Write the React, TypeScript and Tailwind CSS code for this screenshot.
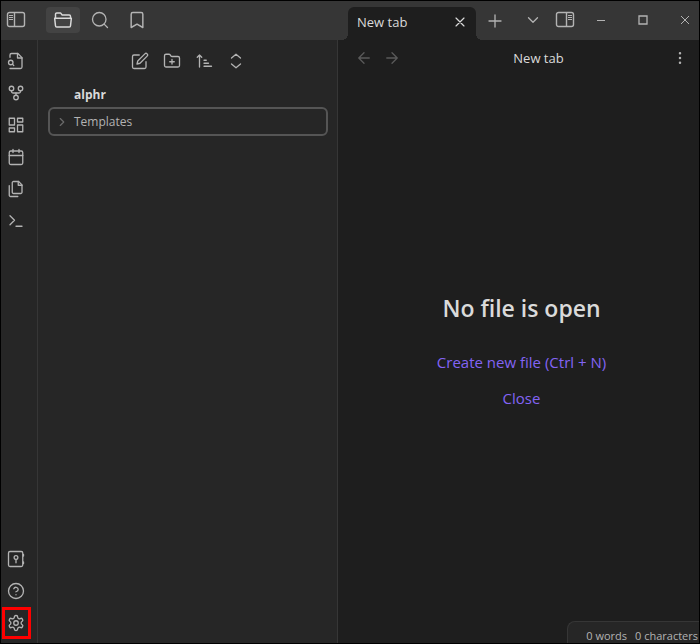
import type { ReactNode } from "react";

interface IconProps {
  size?: number;
  stroke?: number;
  children: ReactNode;
}

function Icon({ size = 18, stroke = 1.75, children }: IconProps) {
  return (
    <svg
      width={size}
      height={size}
      viewBox="0 0 24 24"
      fill="none"
      stroke="currentColor"
      strokeWidth={stroke}
      strokeLinecap="round"
      strokeLinejoin="round"
      aria-hidden="true"
      className="shrink-0"
    >
      {children}
    </svg>
  );
}

function SidebarIcon({ side }: { side: "left" | "right" }) {
  const left = side === "left";
  return (
    <svg width="20" height="18" viewBox="0 0 20 18" fill="none" stroke="currentColor" aria-hidden="true">
      <rect x="1.5" y="1.5" width="17" height="14" rx="2" strokeWidth="1.4" />
      <path d={left ? "M8.5 2v13" : "M11.5 2v13"} strokeWidth="1.4" />
      <path
        d={left ? "M3 4.5h4M3 6.5h4M3 8.5h4" : "M13 4.5h4M13 6.5h4M13 8.5h4"}
        strokeWidth="1"
      />
    </svg>
  );
}

const railItems = [
  {
    label: "Open quick switcher",
    icon: (
      <>
        <path d="M4 22h14a2 2 0 0 0 2-2V7.5L14.5 2H6a2 2 0 0 0-2 2v3" />
        <path d="M14 2v6h6" />
        <circle cx="5" cy="14" r="3" />
        <path d="m9 18-1.5-1.5" />
      </>
    ),
  },
  {
    label: "Open graph view",
    icon: (
      <>
        <circle cx="12" cy="18" r="3" />
        <circle cx="6" cy="6" r="3" />
        <circle cx="18" cy="6" r="3" />
        <path d="M18 9v1a2 2 0 0 1-2 2H8a2 2 0 0 1-2-2V9" />
        <path d="M12 12v3" />
      </>
    ),
  },
  {
    label: "Create new canvas",
    icon: (
      <>
        <rect x="3" y="3" width="7" height="9" />
        <rect x="14" y="3" width="7" height="5" />
        <rect x="14" y="12" width="7" height="9" />
        <rect x="3" y="16" width="7" height="5" />
      </>
    ),
  },
  {
    label: "Open today's daily note",
    icon: (
      <>
        <rect x="3" y="4" width="18" height="18" rx="2" />
        <path d="M16 2v4M8 2v4M3 10h18" />
      </>
    ),
  },
  {
    label: "Insert template",
    icon: (
      <>
        <path d="M15.5 2H8.6c-.4 0-.8.2-1.1.5-.3.3-.5.7-.5 1.1v12.8c0 .4.2.8.5 1.1.3.3.7.5 1.1.5h9.8c.4 0 .8-.2 1.1-.5.3-.3.5-.7.5-1.1V6.5L15.5 2z" />
        <path d="M3 7.6v12.8c0 .4.2.8.5 1.1.3.3.7.5 1.1.5h9.8" />
        <path d="M15 2v5h5" />
      </>
    ),
  },
  {
    label: "Open command palette",
    icon: <path d="m4 17 6-6-6-6M12 19h8" />,
  },
];

const explorerActions = [
  {
    label: "New note",
    icon: (
      <>
        <path d="M11 4H4a2 2 0 0 0-2 2v14a2 2 0 0 0 2 2h14a2 2 0 0 0 2-2v-7" />
        <path d="M18.5 2.5a2.12 2.12 0 0 1 3 3L12 15l-4 1 1-4Z" />
      </>
    ),
  },
  {
    label: "New folder",
    icon: (
      <>
        <path d="M4 20h16a2 2 0 0 0 2-2V8a2 2 0 0 0-2-2h-7.93a2 2 0 0 1-1.66-.9l-.82-1.2A2 2 0 0 0 7.93 3H4a2 2 0 0 0-2 2v13a2 2 0 0 0 2 2Z" />
        <path d="M12 10v6M9 13h6" />
      </>
    ),
  },
  {
    label: "Change sort order",
    icon: <path d="m3 7 3-3 3 3M6 4v16M12 11h3M12 15h6M12 19h10" />,
  },
  {
    label: "Expand all",
    icon: <path d="m6 16 6 5 6-5M6 8l6-5 6 5" />,
  },
];

function TitleBar() {
  return (
    <header className="flex h-[39px] shrink-0 bg-[#363636] text-[#b3b3b3]">
      <div className="flex w-[337px] shrink-0 items-center pb-px">
        <button type="button" aria-label="Collapse left sidebar" className="ml-[5px]">
          <SidebarIcon side="left" />
        </button>
        <button
          type="button"
          aria-label="Files"
          className="ml-5 flex h-[26px] w-[34px] items-center justify-center rounded bg-[#434343] text-[#dadada]"
        >
          <Icon size={20}>
            <path d="M2 10h20l-1 9a1.500 1.500 0 0 1-1.500 1.500h-15A1.500 1.500 0 0 1 3 19Z" />
            <path d="M3 10V5a1.500 1.500 0 0 1 1.500-1.500H9L11 6h8.500A1.500 1.500 0 0 1 21 7.500V10" />
          </Icon>
        </button>
        <button type="button" aria-label="Search" className="ml-[11px]">
          <Icon size={18}>
            <circle cx="11" cy="11" r="9" />
            <path d="m22 22-4.5-4.5" />
          </Icon>
        </button>
        <button type="button" aria-label="Bookmarks" className="ml-[18px]">
          <Icon size={20}>
            <path d="m19 21-7-4-7 4V5a2 2 0 0 1 2-2h10a2 2 0 0 1 2 2v16z" />
          </Icon>
        </button>
      </div>

      <div className="flex min-w-0 flex-1 items-center">
        <div className="relative ml-2.5 flex h-[33px] w-32 items-center justify-between self-end rounded-t-md bg-[#1e1e1e] pr-2 pl-[9px] text-[13px] text-[#dadada] before:absolute before:bottom-0 before:-left-1.5 before:size-1.5 before:bg-[radial-gradient(circle_at_0_0,transparent_6px,#1e1e1e_6px)] after:absolute after:-right-1.5 after:bottom-0 after:size-1.5 after:bg-[radial-gradient(circle_at_100%_0,transparent_6px,#1e1e1e_6px)]">
          <span className="-mt-0.5">New tab</span>
          <button type="button" aria-label="Close tab" className="-mt-1">
            <Icon size={16}>
              <path d="M18 6 6 18M6 6l12 12" />
            </Icon>
          </button>
        </div>
        <button type="button" aria-label="New tab" className="ml-2.5">
          <Icon size={18}>
            <path d="M12 4v16M4 12h16" />
          </Icon>
        </button>
        <div className="ml-auto flex items-center pb-px">
          <button type="button" aria-label="Tab list">
            <Icon size={18}>
              <path d="m6 9 6 6 6-6" />
            </Icon>
          </button>
          <button type="button" aria-label="Collapse right sidebar" className="ml-[13px]">
            <SidebarIcon side="right" />
          </button>
          <button type="button" aria-label="Minimize" className="ml-[5px] flex h-8 w-[42px] items-center justify-center">
            <svg width="10" height="10" viewBox="0 0 10 10" stroke="currentColor" aria-hidden="true">
              <path d="M1 5.5h8" />
            </svg>
          </button>
          <button type="button" aria-label="Maximize" className="flex h-8 w-[42px] items-center justify-center">
            <svg width="10" height="10" viewBox="0 0 10 10" fill="none" stroke="currentColor" aria-hidden="true">
              <path d="M1 1h8v8H1z" strokeWidth="1.3" />
            </svg>
          </button>
          <button type="button" aria-label="Close window" className="flex h-8 w-[35px] items-center justify-center pl-1.5">
            <svg width="10" height="10" viewBox="0 0 10 10" stroke="currentColor" aria-hidden="true">
              <path d="m1 1 8 8M9 1 1 9" />
            </svg>
          </button>
        </div>
      </div>
    </header>
  );
}

function Rail() {
  return (
    <nav
      aria-label="Ribbon"
      className="flex w-[37px] shrink-0 flex-col items-start border-r border-[#363636] bg-[#262626] pt-[5px] pb-1 text-[#b3b3b3]"
    >
      {railItems.map((item) => (
        <button
          key={item.label}
          type="button"
          aria-label={item.label}
          className="flex h-8 w-[30px] items-center justify-center"
        >
          <Icon>{item.icon}</Icon>
        </button>
      ))}
      <button type="button" aria-label="Open another vault" className="mt-auto flex h-8 w-[30px] items-center justify-center">
        <Icon>
          <rect x="2" y="2" width="19" height="20" rx="2" />
          <circle cx="12" cy="10" r="2.5" />
          <path d="M12 12.5V17M22 6v2M22 16v2" />
        </Icon>
      </button>
      <button type="button" aria-label="Help" className="flex h-8 w-[30px] items-center justify-center">
        <Icon>
          <circle cx="12" cy="12" r="10" />
          <path d="M9.09 9a3 3 0 0 1 5.83 1c0 2-3 3-3 3M12 17h.01" />
        </Icon>
      </button>
      <button
        type="button"
        aria-label="Settings"
        className="ml-px flex h-8 w-[29px] items-center border-3 border-[#fe0000] pl-0.5"
      >
        <Icon>
          <path d="M12.22 2h-.44a2 2 0 0 0-2 2v.18a2 2 0 0 1-1 1.73l-.43.25a2 2 0 0 1-2 0l-.15-.08a2 2 0 0 0-2.73.73l-.22.38a2 2 0 0 0 .73 2.73l.15.1a2 2 0 0 1 1 1.72v.51a2 2 0 0 1-1 1.74l-.15.09a2 2 0 0 0-.73 2.73l.22.38a2 2 0 0 0 2.73.73l.15-.08a2 2 0 0 1 2 0l.43.25a2 2 0 0 1 1 1.73V20a2 2 0 0 0 2 2h.44a2 2 0 0 0 2-2v-.18a2 2 0 0 1 1-1.73l.43-.25a2 2 0 0 1 2 0l.15.08a2 2 0 0 0 2.73-.73l.22-.39a2 2 0 0 0-.73-2.73l-.15-.08a2 2 0 0 1-1-1.74v-.5a2 2 0 0 1 1-1.74l.15-.09a2 2 0 0 0 .73-2.73l-.22-.38a2 2 0 0 0-2.73-.73l-.15.08a2 2 0 0 1-2 0l-.43-.25a2 2 0 0 1-1-1.73V4a2 2 0 0 0-2-2z" />
          <circle cx="12" cy="12" r="3" />
        </Icon>
      </button>
    </nav>
  );
}

function Explorer() {
  return (
    <aside className="w-[300px] shrink-0 border-r border-[#363636] bg-[#262626] pt-[5px] pr-[9px] pl-2.5">
      <div className="flex h-8 items-center justify-center text-[#b3b3b3]">
        {explorerActions.map((action) => (
          <button
            key={action.label}
            type="button"
            aria-label={action.label}
            className="flex size-8 items-center justify-center"
          >
            <Icon>{action.icon}</Icon>
          </button>
        ))}
      </div>
      <h2 className="mt-2 pl-[26px] text-xs leading-5 font-bold text-[#dadada]">alphr</h2>
      <button
        type="button"
        aria-expanded="false"
        className="mt-0.5 flex h-[29px] w-full items-center rounded-md border-2 border-[#555] pl-[5px] text-left text-xs text-[#b3b3b3]"
      >
        <span className="text-[#6a6a6a]">
          <Icon size={14} stroke={2}>
            <path d="m9 18 6-6-6-6" />
          </Icon>
        </span>
        <span className="ml-[5px]">Templates</span>
      </button>
    </aside>
  );
}

function EmptyPane() {
  return (
    <main className="flex min-w-0 flex-1 flex-col bg-[#1e1e1e]">
      <div className="flex h-9 shrink-0 items-center text-[13px] text-[#b3b3b3]">
        <div className="flex w-[70px] gap-2.5 pl-[17px] text-[#5a5a5a]">
          <button type="button" aria-label="Back">
            <Icon size={18}>
              <path d="m12 19-7-7 7-7M19 12H5" />
            </Icon>
          </button>
          <button type="button" aria-label="Forward">
            <Icon size={18}>
              <path d="M5 12h14M12 5l7 7-7 7" />
            </Icon>
          </button>
        </div>
        <h2 className="flex-1 pt-0.5 text-center text-[#dadada]">New tab</h2>
        <button type="button" aria-label="More options" className="flex w-[30px] justify-end pr-[11px]">
          <Icon size={16}>
            <circle cx="12" cy="12" r="1" />
            <circle cx="12" cy="5" r="1" />
            <circle cx="12" cy="19" r="1" />
          </Icon>
        </button>
      </div>
      <div className="flex flex-1 flex-col items-center justify-center pb-[18px] pl-1.5">
        <h1 className="text-[23px] leading-8 font-semibold text-[#dadada]">No file is open</h1>
        <button type="button" className="mt-[26px] text-[15px] leading-6 text-[#8364f4]">
          Create new file (Ctrl + N)
        </button>
        <button type="button" className="mt-3 text-[15px] leading-6 text-[#8364f4]">
          Close
        </button>
      </div>
    </main>
  );
}

export default function App() {
  return (
    <div className="relative flex h-screen flex-col overflow-hidden border border-black bg-[#1e1e1e] font-['Open_Sans',sans-serif]">
      <TitleBar />
      <div className="flex min-h-0 flex-1">
        <Rail />
        <Explorer />
        <EmptyPane />
      </div>
      <footer className="absolute right-0 bottom-0 flex h-[22px] gap-2 overflow-hidden rounded-tl-lg border-t border-l border-[#363636] bg-[#262626] pt-1 pr-px pl-[18px] text-[11px] leading-[20px] whitespace-nowrap text-[#b3b3b3]">
        <span>0 words</span>
        <span>0 characters</span>
      </footer>
    </div>
  );
}
